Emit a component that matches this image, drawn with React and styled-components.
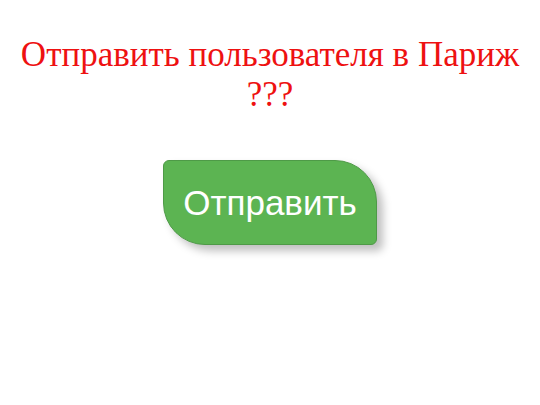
import React from "react";
import styled, { createGlobalStyle } from "styled-components";

const GlobalStyle = createGlobalStyle`
  html, body {
    margin: 0;
    padding: 0;
    background: #ffffff;
  }
`;

const Page = styled.div`
  width: 540px;
  display: flex;
  flex-direction: column;
  align-items: center;
  padding: 35px 0 40px;
`;

const Title = styled.h1`
  margin: 0;
  width: 540px;
  font-family: "Liberation Serif", "Times New Roman", serif;
  font-size: 35px;
  font-weight: normal;
  line-height: 40px;
  color: #ee1111;
  text-align: center;
`;

const SendButton = styled.button`
  margin-top: 45px;
  width: 214px;
  height: 85px;
  padding: 0;
  border: 1px solid #4e9a47;
  border-radius: 6px 42px 6px 42px;
  background: #5cb452;
  box-shadow: 6px 6px 8px rgba(0, 0, 0, 0.25);
  font-family: "Liberation Sans", Arial, sans-serif;
  font-size: 35px;
  color: #ffffff;
  cursor: pointer;
`;

export default function App() {
  return (
    <>
      <GlobalStyle />
      <Page>
        <Title>
          Отправить пользователя в Париж
          <br />
          ???
        </Title>
        <SendButton>Отправить</SendButton>
      </Page>
    </>
  );
}
